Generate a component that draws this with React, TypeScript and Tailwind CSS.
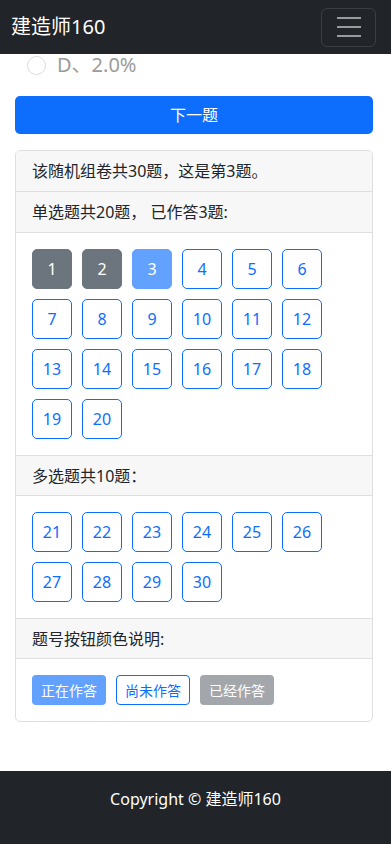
import React from "react";

const font = { fontFamily: '"Segoe UI", "Noto Sans", "Noto Sans CJK SC", sans-serif' };

function NumBtn({ n, kind }: { n: number; kind: "done" | "cur" | "todo" }) {
  const cls =
    kind === "done"
      ? "bg-[#6c757d] border-[#6c757d] text-white"
      : kind === "cur"
      ? "bg-[#62a1fd] border-[#62a1fd] text-white"
      : "bg-white border-[#0d6efd] text-[#0d6efd]";
  return (
    <div
      className={`w-[40px] h-[40px] border rounded-[5px] flex items-center justify-center text-[16px] leading-none ${cls}`}
    >
      {n}
    </div>
  );
}

function Header({ children, top }: { children: React.ReactNode; top?: boolean }) {
  return (
    <div
      className={`h-[41px] ${top ? "" : "border-t"} border-b border-[#dfdfdf] bg-[#f7f7f7] px-[16px] flex items-center text-[16px] text-[#212529]`}
    >
      {children}
    </div>
  );
}

export default function App() {
  const single = Array.from({ length: 20 }, (_, i) => i + 1);
  const multi = Array.from({ length: 10 }, (_, i) => i + 21);
  return (
    <div className="w-[391px] min-h-[844px] bg-white flex flex-col" style={font}>
      <nav className="h-[54px] bg-[#212529] flex items-center justify-between pl-[11px] pr-[15px]">
        <span className="text-white text-[20px] leading-none">建造师160</span>
        <button className="w-[55px] h-[39px] border border-[#3b3f43] rounded-[6px] flex items-center justify-center">
          <svg width="26" height="22" viewBox="0 0 26 22">
            <path d="M1 2h24M1 11h24M1 20h24" stroke="#9a9b9d" strokeWidth="2" />
          </svg>
        </button>
      </nav>
      <main className="flex-1 px-[15px]">
        <div className="h-[22px] flex items-center gap-[11px] pl-[12px]">
          <div className="w-[19px] h-[19px] rounded-full border border-[#dcdcdc] shrink-0" />
          <span className="text-[20px] leading-[22px] text-[#9b9b9b]">D、2.0%</span>
        </div>
        <button className="mt-[20px] w-[358px] h-[38px] bg-[#0d6efd] rounded-[5px] text-white text-[16px] flex items-center justify-center">
          下一题
        </button>
        <div className="mt-[16px] w-[358px] border border-[#dfdfdf] rounded-[5px] overflow-hidden mb-[49px]">
          <Header top>该随机组卷共30题，这是第3题。</Header>
          <div className="h-[41px] border-b border-[#dfdfdf] bg-[#f7f7f7] px-[16px] flex items-center text-[16px] text-[#212529]">
            单选题共20题， 已作答3题:
          </div>
          <div className="p-[16px] flex flex-wrap gap-[10px]">
            {single.map((n) => (
              <NumBtn key={n} n={n} kind={n <= 2 ? "done" : n === 3 ? "cur" : "todo"} />
            ))}
          </div>
          <Header>多选题共10题：</Header>
          <div className="p-[16px] flex flex-wrap gap-[10px]">
            {multi.map((n) => (
              <NumBtn key={n} n={n} kind="todo" />
            ))}
          </div>
          <Header>题号按钮颜色说明:</Header>
          <div className="p-[16px] flex gap-[10px]">
            <div className="w-[74px] h-[30px] rounded-[4px] bg-[#62a1fd] text-white text-[14px] flex items-center justify-center">
              正在作答
            </div>
            <div className="w-[74px] h-[30px] rounded-[4px] border border-[#0d6efd] text-[#0d6efd] text-[14px] flex items-center justify-center">
              尚未作答
            </div>
            <div className="w-[74px] h-[30px] rounded-[4px] bg-[#a3a6aa] text-white text-[14px] flex items-center justify-center">
              已经作答
            </div>
          </div>
        </div>
      </main>
      <footer className="h-[73px] bg-[#212529] flex justify-center pt-[16px] text-white text-[16px] leading-[24px]">
        Copyright © 建造师160
      </footer>
    </div>
  );
}
